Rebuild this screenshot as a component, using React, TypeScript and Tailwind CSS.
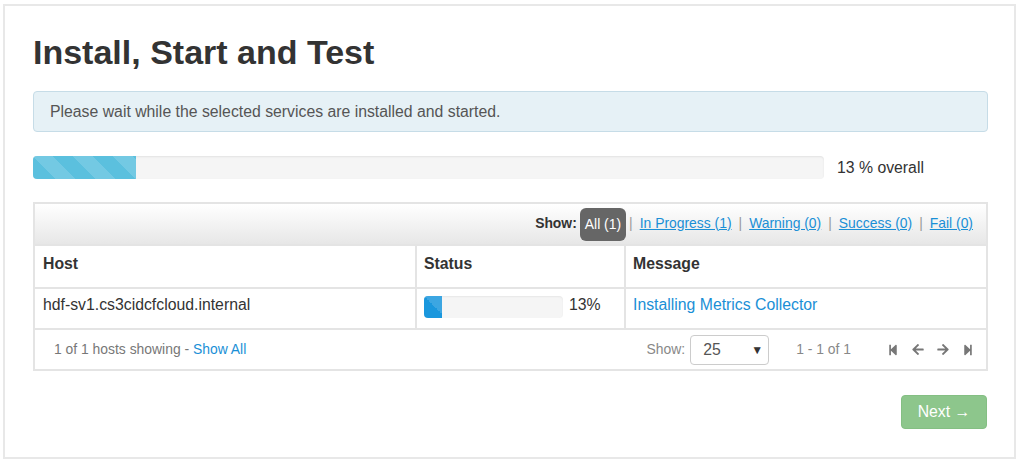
import React from "react";
import { FaStepBackward, FaStepForward, FaArrowLeft, FaArrowRight } from "react-icons/fa";

const stripe =
  "bg-[linear-gradient(45deg,rgba(255,255,255,0.15)_25%,transparent_25%,transparent_50%,rgba(255,255,255,0.15)_50%,rgba(255,255,255,0.15)_75%,transparent_75%,transparent)] bg-[length:40px_40px]";

function Sep({ first }: { first?: boolean }) {
  return (
    <span className={first ? "ml-[3px] mr-[7px] text-[#999]" : "mx-[7px] text-[#999]"}>|</span>
  );
}

export default function App() {
  return (
    <div className="w-[1024px] h-[465px] bg-white pl-[3px] pt-[4px] font-['Liberation_Sans',Arial,sans-serif] text-[#333]">
      <div className="w-[1013px] h-[455px] border-2 border-[#e8e8e8] pl-[28px] pr-[26px] pt-[27px]">
        <h1 className="text-[34px] leading-[38px] font-bold text-[#333]">Install, Start and Test</h1>

        <div className="mt-[20px] h-[41px] border border-[#c6dce7] bg-[#e6f1f6] rounded-[4px] flex items-center px-[16px] text-[15.8px] text-[#555]">
          Please wait while the selected services are installed and started.
        </div>

        <div className="mt-[24px] flex items-center h-[23px]">
          <div className="w-[791px] h-[23px] bg-[#f5f5f5] rounded-[4px] overflow-hidden shadow-[inset_0_1px_2px_rgba(0,0,0,0.08)]">
            <div className={`h-full w-[13%] bg-[#5bc0de] ${stripe}`} />
          </div>
          <span className="ml-[13px] text-[15.8px] text-[#333]">13 % overall</span>
        </div>

        <div className="mt-[23px] border-2 border-[#e4e4e4]">
          {/* toolbar */}
          <div className="h-[40px] bg-linear-to-b from-white to-[#e7e7e7] flex items-center justify-end pr-[13px] pb-[2px] text-[13.9px]">
            <span className="font-bold text-[#333]">Show:</span>
            <span className="ml-[3px] mt-[2px] h-[33px] px-[5px] rounded-[6px] bg-[#666] text-white flex items-center">All (1)</span>
            <Sep first />
            <span className="text-[#1a8fd6] underline">In Progress (1)</span>
            <Sep />
            <span className="text-[#1a8fd6] underline">Warning (0)</span>
            <Sep />
            <span className="text-[#1a8fd6] underline">Success (0)</span>
            <Sep />
            <span className="text-[#1a8fd6] underline">Fail (0)</span>
          </div>

          {/* header */}
          <div className="flex border-t-2 border-[#e4e4e4] h-[43px] text-[15.8px] font-bold text-[#333]">
            <div className="w-[382px] border-r-2 border-[#e4e4e4] pl-[8px] pt-[8px] leading-[20px]">Host</div>
            <div className="w-[209px] border-r-2 border-[#e4e4e4] pl-[7px] pt-[8px] leading-[20px]">Status</div>
            <div className="flex-1 pl-[7px] pt-[8px] leading-[20px]">Message</div>
          </div>

          {/* body row */}
          <div className="flex border-t-2 border-[#e4e4e4] h-[41px] text-[15.8px] text-[#333]">
            <div className="w-[382px] border-r-2 border-[#e4e4e4] pl-[8px] pt-[6px] leading-[20px]">
              hdf-sv1.cs3cidcfcloud.internal
            </div>
            <div className="w-[209px] border-r-2 border-[#e4e4e4] pl-[7px] flex items-start pt-[7px]">
              <div className="w-[139px] h-[22px] bg-[#f5f5f5] rounded-[4px] overflow-hidden shadow-[inset_0_1px_2px_rgba(0,0,0,0.06)]">
                <div className={`h-full w-[13%] bg-[#1a97dd] ${stripe}`} />
              </div>
              <span className="ml-[6px] leading-[20px] -mt-[1px]">13%</span>
            </div>
            <div className="flex-1 pl-[7px] pt-[6px] leading-[20px] text-[#1a8fd6]">Installing Metrics Collector</div>
          </div>

          {/* footer */}
          <div className="flex items-center border-t-2 border-[#e4e4e4] h-[41px] text-[13.9px] pl-[19px] pr-[12px]">
            <span className="text-[#777]">
              1 of 1 hosts showing - <span className="text-[#1a8fd6]">Show All</span>
            </span>
            <div className="ml-auto flex items-center">
              <span className="text-[#888]">Show:</span>
              <div className="ml-[5px] w-[79px] h-[30px] border border-[#ccc] rounded-[4px] bg-white flex items-center pl-[12px] pr-[5px] text-[15.8px] text-[#555]">
                <span>25</span>
                <span className="ml-auto text-[12px] text-[#333]">▼</span>
              </div>
              <span className="ml-[27px] text-[#888]">1 - 1 of 1</span>
              <div className="ml-[36px] flex items-center gap-[13px] text-[#777]">
                <span className="w-[12px] flex justify-center"><FaStepBackward size={12} /></span>
                <span className="w-[12px] flex justify-center"><FaArrowLeft size={13} /></span>
                <span className="w-[12px] flex justify-center"><FaArrowRight size={13} /></span>
                <span className="w-[12px] flex justify-center"><FaStepForward size={12} /></span>
              </div>
            </div>
          </div>
        </div>

        <div className="mt-[24px] flex justify-end pr-[1px]">
          <div className="w-[86px] h-[34px] rounded-[4px] bg-[#8dc68c] border border-[#84bf83] text-white text-[15.8px] flex items-center justify-center">
            Next →
          </div>
        </div>
      </div>
    </div>
  );
}
